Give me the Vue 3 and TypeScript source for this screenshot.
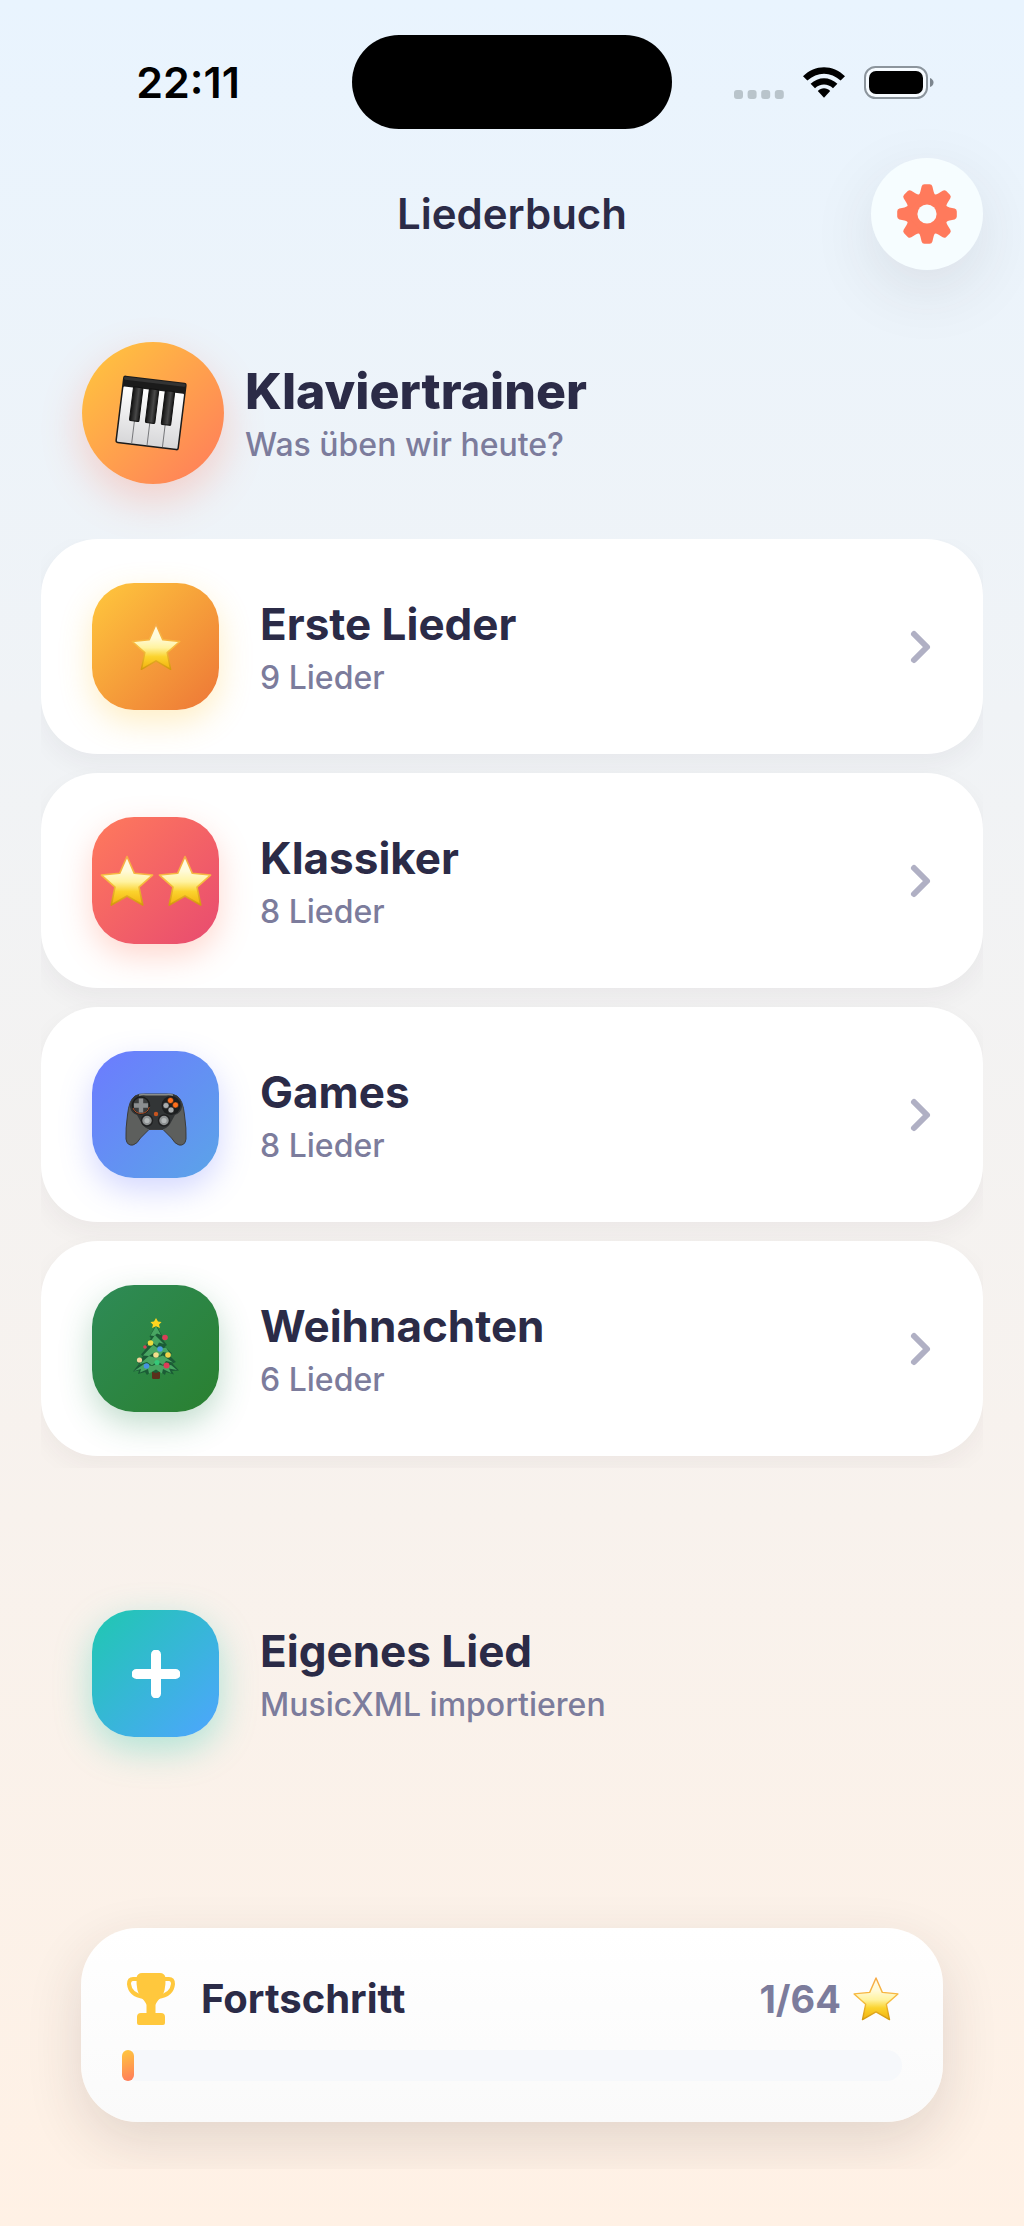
<script setup lang="ts">
import { computed } from 'vue'

type Icon = 'star' | 'stars' | 'gamepad' | 'tree'

interface Category {
  title: string
  songs: number
  icon: Icon
}

const categories: Category[] = [
  { title: 'Erste Lieder', songs: 9, icon: 'star' },
  { title: 'Klassiker', songs: 8, icon: 'stars' },
  { title: 'Games', songs: 8, icon: 'gamepad' },
  { title: 'Weihnachten', songs: 6, icon: 'tree' },
]

const earned = 1
const total = 64
const progress = computed(() => `${(earned / total) * 100}%`)

const teeth = [0, 45, 90, 135, 180, 225, 270, 315]
</script>

<template>
  <div class="app">
    <svg class="defs" width="0" height="0" aria-hidden="true">
      <defs>
        <linearGradient id="starFill" x1="0" y1="0" x2="0" y2="1">
          <stop offset="0" stop-color="#fffbe6" />
          <stop offset="0.3" stop-color="#fffad8" />
          <stop offset="0.52" stop-color="#fff3a0" />
          <stop offset="0.72" stop-color="#fbd32e" />
          <stop offset="1" stop-color="#f2b20c" />
        </linearGradient>
        <linearGradient id="starEdge" x1="0" y1="0" x2="0" y2="1">
          <stop offset="0" stop-color="#f6a945" />
          <stop offset="0.55" stop-color="#f7bd3e" />
          <stop offset="1" stop-color="#d39a0c" />
        </linearGradient>
        <symbol id="starShape" viewBox="0 0 48 46">
          <path
            d="M24 2 30.300 16.400 45.900 17.900 34.300 28.200 37.500 43.600 24 35.800 10.500 43.600 13.700 28.200 2.100 17.900 17.700 16.400Z"
            fill="url(#starFill)"
            stroke="url(#starEdge)"
            stroke-width="1.4"
            stroke-linejoin="round"
          />
        </symbol>
      </defs>
    </svg>

    <header class="status">
      <span class="side"><time class="clock">22:11</time></span>
      <span class="island"></span>
      <span class="side indicators">
        <svg width="50" height="9" viewBox="0 0 50 9" class="dots" aria-hidden="true">
          <g fill="#b9c4cb">
            <rect x="0" width="9" height="9" rx="3" />
            <rect x="13.6" width="9" height="9" rx="3" />
            <rect x="27.2" width="9" height="9" rx="3" />
            <rect x="40.8" width="9" height="9" rx="3" />
          </g>
        </svg>
        <svg width="44" height="33" viewBox="0 0 44 33" class="wifi" aria-hidden="true">
          <path d="M1 10.2C13 -1.9 31 -1.9 43 10.2L38.6 14.6C29 5.4 15 5.4 5.4 14.6Z" />
          <path d="M8.6 17.8C16.3 10.3 27.7 10.3 35.4 17.8L31 22.2C25.8 17.2 18.2 17.2 13 22.2Z" />
          <path d="M15.8 25C19.3 21.3 24.7 21.3 28.2 25L22 31.8Z" />
        </svg>
        <svg width="70" height="33" viewBox="0 0 70 33" aria-hidden="true">
          <rect x="1" y="1" width="62" height="31" rx="10.5" fill="#f6fbff" stroke="#8c959d" stroke-width="2" />
          <rect x="5" y="5" width="54" height="23" rx="7" />
          <path d="M66 12Q69.5 13.500 69.500 16.500T66 21Z" fill="#7d868e" />
        </svg>
      </span>
    </header>

    <nav class="nav">
      <span></span>
      <h1>Liederbuch</h1>
      <button class="settings" type="button" aria-label="Einstellungen">
        <svg width="60" height="60" viewBox="0 0 60 60" aria-hidden="true">
          <mask id="gearHole">
            <rect width="60" height="60" fill="#fff" />
            <circle cx="30" cy="30" r="9.600" fill="#000" />
          </mask>
          <g fill="#ff7a5c" mask="url(#gearHole)">
            <circle cx="30" cy="30" r="20.500" />
            <path
              v-for="angle in teeth"
              :key="angle"
              d="M24.600 2.400Q25.200 0.200 27.400 0.200H32.600Q34.800 0.200 35.400 2.400L36.600 7.500Q37 9.300 38 10.500V14H22V10.500Q23 9.300 23.400 7.500Z"
              :transform="`rotate(${angle} 30 30)`"
            />
          </g>
        </svg>
      </button>
    </nav>

    <main>
      <section class="hero">
        <span class="avatar">
          <svg width="72" height="76" viewBox="0 0 72 76" aria-hidden="true">
            <defs>
              <linearGradient id="whiteKey" x1="0" y1="0" x2="0" y2="1">
                <stop offset="0" stop-color="#ffffff" />
                <stop offset="1" stop-color="#d7d7d9" />
              </linearGradient>
              <linearGradient id="blackKey" x1="0" y1="0" x2="1" y2="0">
                <stop offset="0" stop-color="#111" />
                <stop offset="0.6" stop-color="#484848" />
                <stop offset="1" stop-color="#161616" />
              </linearGradient>
            </defs>
            <g transform="rotate(7 36 38)">
              <rect x="4" y="4" width="64" height="68" rx="2.500" fill="#1b1b1b" />
              <rect x="5.500" y="15" width="61" height="55.500" rx="1" fill="url(#whiteKey)" />
              <path d="M20.500 15V70.500M36 15V70.500M51.500 15V70.500" stroke="#77787b" stroke-width="1" />
              <rect x="5" y="5" width="62" height="3" rx="1.500" fill="#333" />
              <g fill="url(#blackKey)" stroke="#111" stroke-width="1">
                <rect x="15.500" y="14" width="9.500" height="34" rx="1" />
                <rect x="31.500" y="14" width="9.500" height="34" rx="1" />
                <rect x="47.500" y="14" width="9.500" height="34" rx="1" />
              </g>
            </g>
          </svg>
        </span>
        <div class="text">
          <h2 class="brand">Klaviertrainer</h2>
          <p>Was üben wir heute?</p>
        </div>
      </section>

      <ul class="list">
        <li v-for="item in categories" :key="item.title">
          <button class="row card" type="button">
            <span class="tile" :class="item.icon">
              <svg v-if="item.icon === 'star'" width="52" height="50" aria-hidden="true">
                <use href="#starShape" width="52" height="50" />
              </svg>
              <template v-else-if="item.icon === 'stars'">
                <svg v-for="n in 2" :key="n" width="56" height="54" aria-hidden="true">
                  <use href="#starShape" width="56" height="54" />
                </svg>
              </template>
              <svg v-else-if="item.icon === 'gamepad'" width="62" height="54" viewBox="0 0 62 54" aria-hidden="true">
                <path
                  d="M10 3Q14 0.500 20 1H42Q48 0.500 52 3Q58 7 59.500 22Q61.500 36 61 46Q60 53 54 52Q50 51 46.500 45L38 36.500H24L15.500 45Q12 51 8 52Q2 53 1 46Q0.500 36 2.500 22Q4 7 10 3Z"
                  fill="#5d5f5d" stroke="#3b3c3d" stroke-width="1"
                />
                <path d="M10 3Q14 0.500 20 1H42Q48 0.500 52 3Q57 7 57 14Q56 20 50 22L45 31Q41 37 36 36H26Q21 37 17 31L12 22Q6 20 5 14Q5 7 10 3Z" fill="#323536" />
                <path d="M14 2.200Q17 1.200 21 1.700H41Q45 1.200 48 2.200" fill="none" stroke="#8b8e89" stroke-width="1.500" />
                <circle cx="16" cy="12.500" r="8.500" fill="#3b3d3e" stroke="#1b1c1c" stroke-width="1.500" />
                <path d="M8 15A8.600 8.600 0 0 0 24.300 14" fill="none" stroke="#b4532a" stroke-width="1" />
                <path d="M13.800 5.500H18.200V10.300H23V14.700H18.200V19.500H13.800V14.700H9V10.300H13.800Z" fill="#8b8e90" />
                <circle cx="46" cy="12.500" r="9.500" fill="#1d1f20" />
                <g stroke="#161616" stroke-width="0.500">
                  <circle cx="45.500" cy="7.500" r="3" fill="#ff6f1c" />
                  <circle cx="50.500" cy="12" r="3" fill="#ff6f1c" />
                  <circle cx="41" cy="12.500" r="3" fill="#a9adae" />
                  <circle cx="46" cy="17" r="3" fill="#a9adae" />
                </g>
                <circle cx="31" cy="21" r="2.200" fill="#c85520" />
                <g stroke="#202122" stroke-width="1.500">
                  <circle cx="22" cy="27.500" r="5.500" fill="#8d9192" />
                  <circle cx="39" cy="27.500" r="5.500" fill="#8d9192" />
                </g>
                <circle cx="22" cy="27.500" r="2.600" fill="#b3b7b8" />
                <circle cx="39" cy="27.500" r="2.600" fill="#b3b7b8" />
              </svg>
              <svg v-else width="48" height="62" viewBox="0 0 48 62" aria-hidden="true">
                <rect x="20" y="50" width="8" height="11" rx="1.500" fill="#5a2f1b" />
                <path d="M24 7L31 19 29.500 20 35 27 33 28.500 40 35.500 37 37 44 44 40.500 45.500 47 52.500 40 53 42 56.500 34 54 33 57 28 53.500 24 55 19 53.500 15 57 13 54 6 56 7 52.500 1 53.500 7 46 5 44 11 38.500 9 36.500 15 29.500 13.500 28 19 20 17.500 18.500Z" fill="#1b5c36" />
                <g fill="#48a662">
                  <path d="M24 8L29 17 25 15.500 22 18 18.500 17.500Z" />
                  <path d="M23 17L32 26 27 24.500 25 28 21 25 15 28.500Z" />
                  <path d="M21 27L27 31 34 29.500 38 35.500 31 34 28 38 23 34 17 38 11 37.500Z" />
                  <path d="M17 38L24 40 31 37.500 41 44.500 34 43 31 47 25 43 20 47.500 15 44 7 46.500Z" />
                  <path d="M12 46L20 48 25 46 32 48 39 47 45 52 37 50.500 39 55 31 51 30 55.500 24 51.500 17 55.500 16 51 8 54.500 9 51 2 53Z" />
                </g>
                <path d="M24 0L26 3.600 29.500 4 27 6.800 28 10 24 8.300 20 10 21 6.800 18.500 4 22 3.600Z" fill="#ffd51f" />
                <circle cx="33" cy="19.500" r="2.800" fill="#dc3e58" />
                <circle cx="18.500" cy="25" r="2.800" fill="#eedb3e" />
                <circle cx="13" cy="29" r="1.800" fill="#d54058" />
                <circle cx="28" cy="31" r="2.800" fill="#4b9be0" />
                <circle cx="24" cy="37" r="2.800" fill="#f3df8d" />
                <circle cx="36" cy="37" r="2.800" fill="#f3d34a" />
                <circle cx="7.500" cy="42" r="2.600" fill="#f4d49a" />
                <circle cx="25" cy="44.500" r="2.600" fill="#35c878" />
                <circle cx="14.500" cy="48" r="2.800" fill="#4692e0" />
                <circle cx="34.500" cy="47.500" r="3" fill="#dc3e58" />
              </svg>
            </span>
            <span class="text">
              <span class="title">{{ item.title }}</span>
              <span class="sub">{{ item.songs }} Lieder</span>
            </span>
            <svg class="chevron" width="24" height="36" viewBox="0 0 24 36" aria-hidden="true">
              <path d="M6 5L19 18 6 31" />
            </svg>
          </button>
        </li>
      </ul>

      <button class="row import" type="button">
        <span class="tile plus">
          <svg width="48" height="48" viewBox="0 0 48 48" aria-hidden="true">
            <path d="M24 4.500V43.500M4.500 24H43.500" stroke="#fff" stroke-width="10" stroke-linecap="round" />
          </svg>
        </span>
        <span class="text">
          <span class="title">Eigenes Lied</span>
          <span class="sub">MusicXML importieren</span>
        </span>
      </button>
    </main>

    <footer class="dock">
      <section class="progress">
        <div class="summary">
          <svg width="48" height="52" viewBox="0 0 48 52" aria-hidden="true">
            <g fill="none" stroke="#ffc83d" stroke-width="4">
              <path d="M12 6H6Q2 6 2 11Q3 22 17 24" />
              <path d="M36 6H42Q46 6 46 11Q45 22 31 24" />
            </g>
            <path
              d="M9.500 4.500Q10.500 0 15 0H33Q37.500 0 38.500 4.500Q39 19 34 24.500Q29 29 28.500 32V40H34Q38 40 38 44V50Q38 52 36 52H12Q10 52 10 50V44Q10 40 14 40H19.500V32Q19 29 14 24.500Q9 19 9.500 4.500Z"
              fill="#ffc83d"
            />
          </svg>
          <h2 id="progressLabel">Fortschritt</h2>
          <span class="count">{{ earned }}/{{ total }}</span>
          <svg width="48" height="46" aria-hidden="true">
            <use href="#starShape" width="48" height="46" />
          </svg>
        </div>
        <div
          class="track"
          role="progressbar"
          aria-labelledby="progressLabel"
          :aria-valuenow="earned"
          aria-valuemin="0"
          :aria-valuemax="total"
        >
          <div class="fill" :style="{ width: progress }"></div>
        </div>
      </section>
    </footer>
  </div>
</template>

<style>
body {
  margin: 0;
}
</style>

<style scoped>
.app {
  box-sizing: border-box;
  min-height: 100vh;
  padding-bottom: 56px;
  background: linear-gradient(#e9f4fe, #fff1e5);
  font-family: Inter, "Liberation Sans", sans-serif;
  color: #2b2b47;
}

.defs {
  position: absolute;
}

h1,
h2,
p,
ul {
  margin: 0;
  padding: 0;
}

button {
  border: 0;
  margin: 0;
  font: inherit;
  color: inherit;
  text-align: left;
  cursor: pointer;
}

svg {
  display: block;
  flex: none;
}

.status {
  display: grid;
  grid-template-columns: 1fr 320px 1fr;
  padding: 35px 40px 29px;
}

.side {
  display: flex;
  align-items: center;
  justify-content: center;
}

.clock {
  margin-right: 16px;
  font-size: 43px;
  line-height: 48px;
  font-weight: 600;
  color: #000;
}

.island {
  height: 94px;
  border-radius: 47px;
  background: #000;
}

.indicators {
  justify-content: flex-end;
  padding-right: 50px;
}

.dots {
  margin: 24px 18px 0 0;
}

.wifi {
  margin-right: 18px;
}

.nav {
  display: grid;
  grid-template-columns: 1fr auto 1fr;
  align-items: center;
  padding: 0 41px;
}

.nav h1 {
  font-size: 42px;
  line-height: 48px;
  font-weight: 600;
}

.settings {
  justify-self: end;
  display: flex;
  align-items: center;
  justify-content: center;
  width: 112px;
  height: 112px;
  padding: 0;
  border-radius: 50%;
  background: #f6fdff;
  box-shadow: 0 20px 64px rgba(60, 50, 50, 0.1);
}

main {
  padding: 0 41px;
}

.hero {
  display: flex;
  align-items: center;
  gap: 21px;
  padding: 72px 41px 55px;
}

.avatar {
  flex: none;
  display: flex;
  align-items: center;
  justify-content: center;
  box-sizing: border-box;
  width: 142px;
  height: 142px;
  padding-right: 4px;
  border-radius: 50%;
  background: linear-gradient(135deg, #ffc83d, #ff7a5c);
  box-shadow: 0 16px 40px rgba(255, 122, 92, 0.3);
}

.text {
  display: flex;
  flex-direction: column;
  gap: 6px;
}

.hero .text {
  gap: 4px;
}

.brand {
  font-size: 50px;
  line-height: 60px;
  font-weight: 800;
}

.hero p,
.sub {
  font-size: 32px;
  line-height: 40px;
  font-weight: 500;
  color: #7c7c9c;
}

.title {
  font-size: 44px;
  line-height: 56px;
  font-weight: 700;
}

.list {
  display: flex;
  flex-direction: column;
  gap: 19px;
  list-style: none;
  clip-path: inset(0 0 -12px 0);
}

.row {
  display: flex;
  align-items: center;
  gap: 41px;
  width: 100%;
  padding: 44px 51px;
  background: transparent;
}

.card {
  border-radius: 57px;
  background: #fff;
  box-shadow: 0 10px 24px rgba(50, 45, 60, 0.05);
}

.tile {
  flex: none;
  display: flex;
  align-items: center;
  justify-content: center;
  gap: 2px;
  box-sizing: border-box;
  width: 127px;
  height: 127px;
  border-radius: 42px;
}

.star {
  background: linear-gradient(135deg, #ffc83d, #ed7637);
  box-shadow: 0 12px 32px rgba(255, 200, 61, 0.3);
}

.stars {
  background: linear-gradient(135deg, #ff7a5c, #e84b70);
  box-shadow: 0 12px 32px rgba(255, 122, 92, 0.3);
}

.gamepad {
  padding-top: 10px;
  background: linear-gradient(135deg, #6c7bff, #5ba4e8);
  box-shadow: 0 12px 32px rgba(108, 123, 255, 0.3);
}

.tree {
  background: linear-gradient(135deg, #2e8b57, #2a8030);
  box-shadow: 0 12px 32px rgba(46, 139, 87, 0.3);
}

.plus {
  background: linear-gradient(135deg, #1fc8b0, #4ea5ff);
  box-shadow: 0 12px 36px rgba(31, 200, 176, 0.35);
}

.chevron {
  margin-left: auto;
}

.chevron path {
  fill: none;
  stroke: #b0b0c4;
  stroke-width: 6;
  stroke-linecap: round;
  stroke-linejoin: round;
}

.import {
  margin-top: 110px;
}

.dock {
  margin-top: 67px;
  padding: 80px 81px 47px;
  overflow: hidden;
}

.progress {
  padding: 41px;
  border-radius: 57px;
  background: linear-gradient(#fff, #fafafa);
  box-shadow: 0 20px 56px rgba(60, 40, 40, 0.14);
}

.summary {
  display: flex;
  align-items: center;
  height: 60px;
  padding: 0 2px 0 5px;
}

.summary h2 {
  margin: 0 auto 0 26px;
  font-size: 40px;
  line-height: 48px;
  font-weight: 700;
}

.count {
  margin-right: 11px;
  font-size: 38px;
  line-height: 48px;
  font-weight: 700;
  color: #7c7c9c;
}

.track {
  height: 31px;
  margin-top: 21px;
  border-radius: 16px;
  background: #f6f8fb;
}

.fill {
  height: 100%;
  border-radius: 6px;
  background: linear-gradient(160deg, #ffc83d, #ff7a5c);
}
</style>
